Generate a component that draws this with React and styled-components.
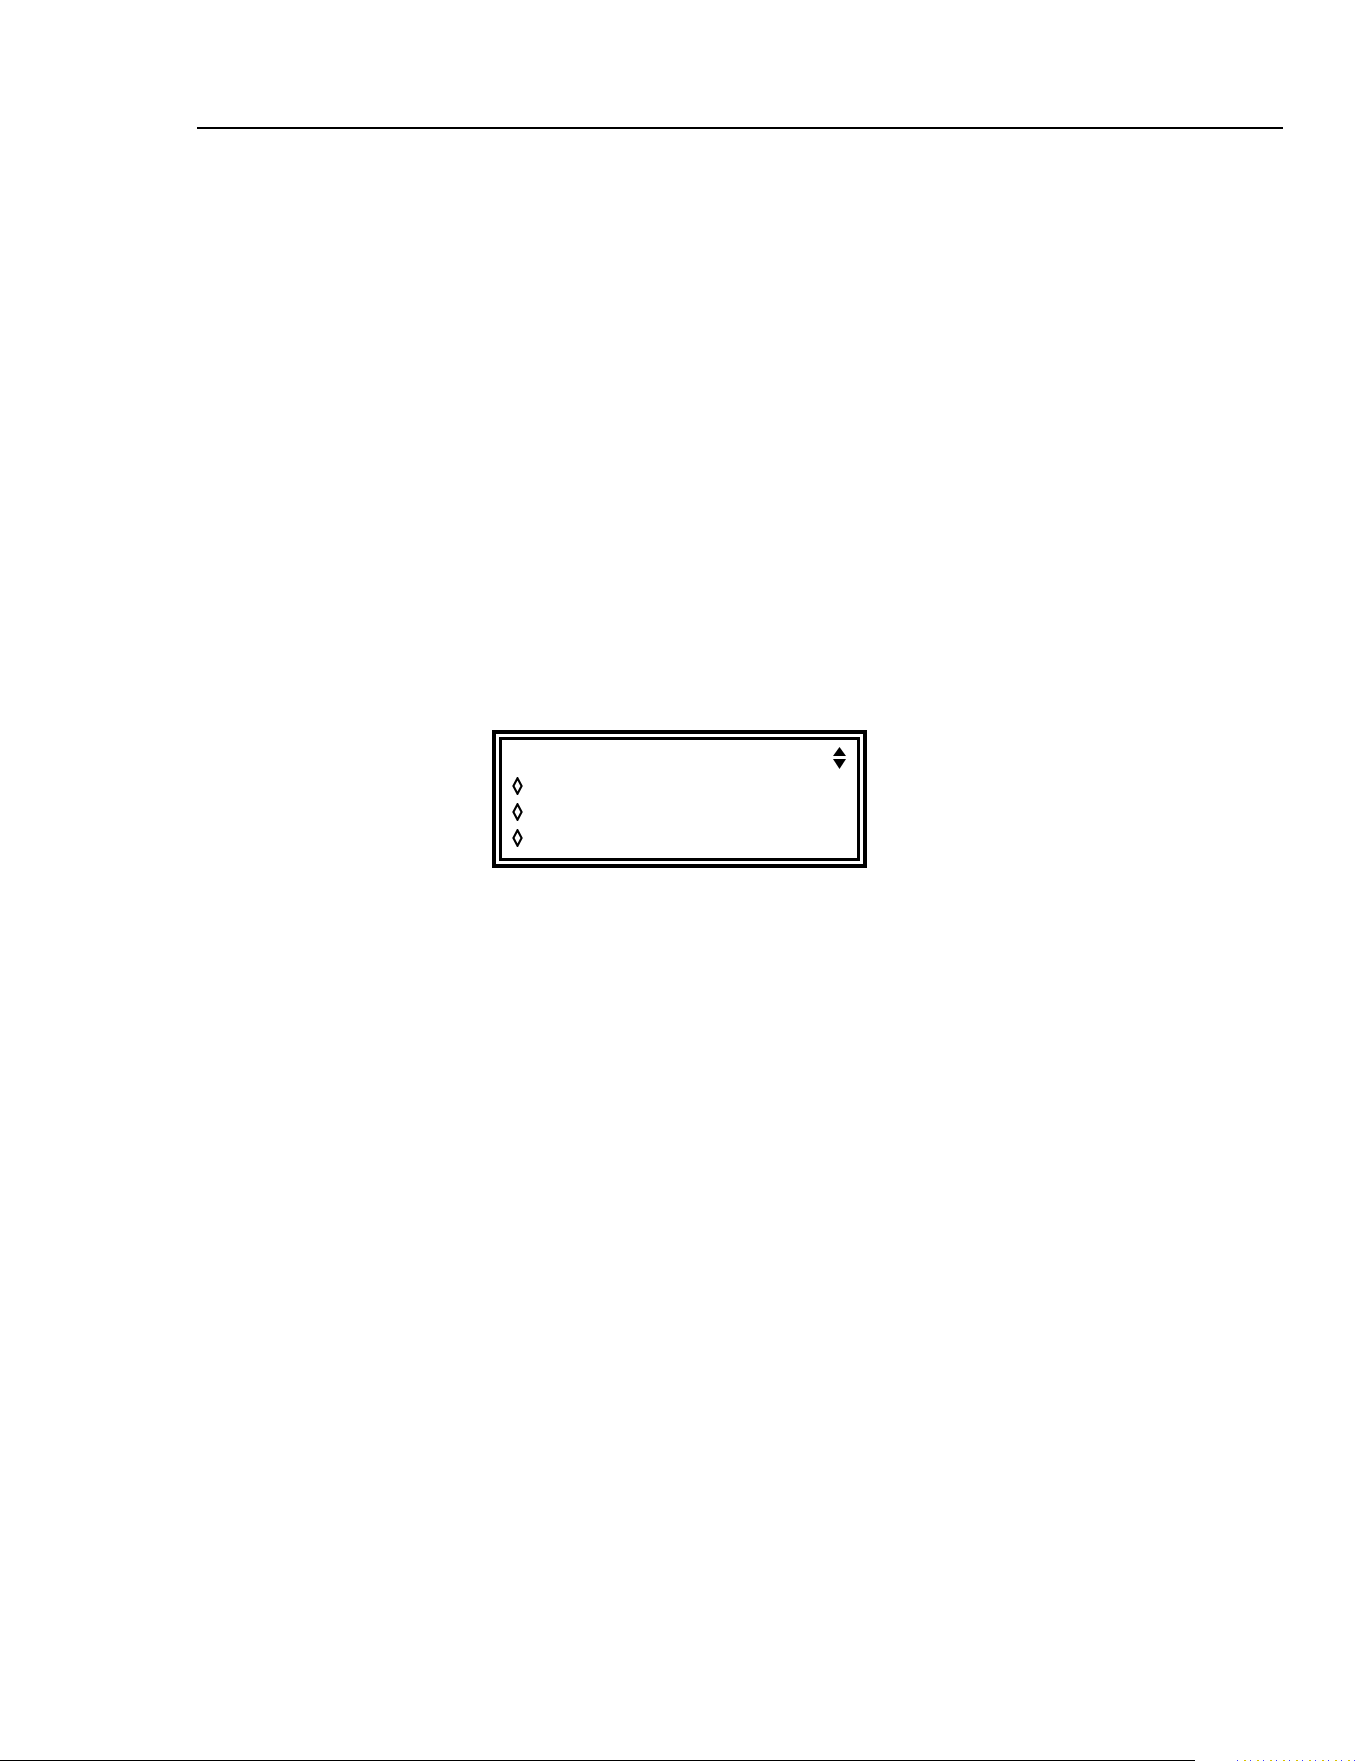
import styled, { createGlobalStyle } from 'styled-components';

const GlobalStyle = createGlobalStyle`
    html, body {
        margin: 0;
        padding: 0;
        background: #fff;
        font-family: "Liberation Serif", serif;
    }
`;

const Page = styled.div`
    width: 1361px;
    height: 1761px;
    display: flex;
    flex-direction: column;
    overflow: hidden;
`;

const HeaderRule = styled.hr`
    margin: 127px 0 0 197px;
    width: 1086px;
    height: 2px;
    border: 0;
    background: #000;
`;

const Stage = styled.div`
    flex: 1;
    display: flex;
    justify-content: center;
    align-items: flex-start;
    padding-top: 601px;
    padding-right: 2px;
`;

const Frame = styled.div`
    width: 375px;
    height: 138px;
    box-sizing: border-box;
    border: 4px solid #000;
    padding: 3px;
`;

const Screen = styled.div`
    height: 100%;
    box-sizing: border-box;
    border: 3px solid #000;
    padding: 7px 11px 0 10px;
    display: flex;
    flex-direction: column;
`;

const ScrollRow = styled.div`
    display: flex;
    justify-content: flex-end;
    height: 22px;
    margin-bottom: 4px;
`;

const Row = styled.div`
    display: flex;
    align-items: center;
    height: 26px;
`;

const Footer = styled.div`
    display: flex;
    align-items: flex-end;
    height: 2px;
    .rule {
        width: 1195px;
        height: 1px;
        background: #000;
    }
    .specks {
        margin-left: 42px;
        width: 123px;
        height: 1px;
        background-image: repeating-linear-gradient(
            90deg,
            #3a3aff 0 1px,
            transparent 1px 7px,
            #d9c000 7px 9px,
            transparent 9px 13px
        );
    }
`;

const ScrollArrows = () => (
    <svg width="13" height="22" viewBox="0 0 13 22">
        <polygon points="6.5,0 13,9 0,9" fill="#000" />
        <polygon points="0,12 13,12 6.5,22" fill="#000" />
    </svg>
);

const Diamond = () => (
    <svg width="11" height="18" viewBox="0 0 11 18">
        <path d="M5.5 1.2 L9.6 9 L5.5 16.8 L1.4 9 Z" fill="none" stroke="#000" strokeWidth="2.1" />
    </svg>
);

const items = [1, 2, 3];

export default function App() {
    return (
        <>
            <GlobalStyle />
            <Page>
                <HeaderRule />
                <Stage>
                    <Frame>
                        <Screen>
                            <ScrollRow>
                                <ScrollArrows />
                            </ScrollRow>
                            {items.map((i) => (
                                <Row key={i}>
                                    <Diamond />
                                </Row>
                            ))}
                        </Screen>
                    </Frame>
                </Stage>
                <Footer>
                    <div className="rule" />
                    <div className="specks" />
                </Footer>
            </Page>
        </>
    );
}
